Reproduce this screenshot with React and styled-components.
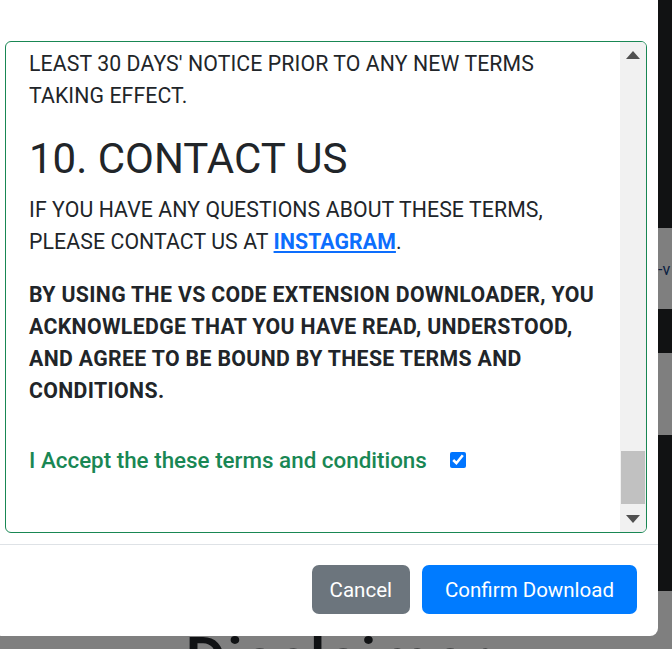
import React from "react";
import styled, { createGlobalStyle } from "styled-components";

const GlobalStyle = createGlobalStyle`
  html, body {
    margin: 0;
    padding: 0;
    font-family: Roboto, "Liberation Sans", sans-serif;
    color: #212529;
  }
`;

// what is visible of the page behind the backdrop, on the right edge
const stripes = [
  { h: 228, dark: true },
  { h: 81, dark: false, text: "-v" },
  { h: 44, dark: true },
  { h: 82, dark: false },
  { h: 156, dark: true },
  { h: 58, dark: false },
];

const Page = styled.div`
  position: relative;
  width: 672px;
  height: 649px;
  overflow: hidden;
  background: #fff;
`;

const Underlay = styled.div`
  display: flex;
  height: 100%;
`;

const MainArea = styled.div`
  flex: 1;
  padding: 624px 0 0 185px;
`;

const PageTitle = styled.h1`
  margin: 0;
  font-size: 64px;
  font-weight: 500;
  line-height: 1.2;
  color: #212529;
`;

const SideStrip = styled.div`
  width: 14px;
  display: flex;
  flex-direction: column;
`;

const Stripe = styled.div`
  height: ${(p) => p.$h}px;
  background: ${(p) => (p.$dark ? "#222427" : "#fff")};
  padding-top: 32px;
  box-sizing: border-box;
  font-size: 16px;
  color: #123f85;
  white-space: nowrap;
  overflow: hidden;
`;

const Backdrop = styled.div`
  position: absolute;
  inset: 0;
  background: rgba(0, 0, 0, 0.5);
`;

const Modal = styled.div`
  position: absolute;
  left: -6px;
  top: -10px;
  width: 664px;
  background: #fff;
  border-radius: 8px;
  display: flex;
  flex-direction: column;
`;

const ModalBody = styled.div`
  padding: 51px 11px 11px;
`;

const TermsBox = styled.div`
  display: flex;
  height: 492px;
  box-sizing: border-box;
  border: 1px solid #198754;
  border-radius: 6px;
  overflow: hidden;
`;

const TermsContent = styled.div`
  flex: 1;
  padding: 6px 13px 0 23px;
  font-size: 21.25px;
  line-height: 32px;
`;

const Para = styled.p`
  margin: 0 0 ${(p) => p.$mb ?? 16}px;
  text-transform: uppercase;
  font-weight: ${(p) => (p.$bold ? 700 : 400)};
  letter-spacing: ${(p) => (p.$bold ? "0.35px" : "0.1px")};
`;

const SectionTitle = styled.h2`
  margin: 22px 0 10px;
  font-size: 42px;
  font-weight: 400;
  line-height: 1.2;
  text-transform: uppercase;
`;

const Link = styled.a`
  color: #0d6efd;
  font-weight: 700;
  text-decoration: underline;
`;

const AcceptRow = styled.label`
  display: flex;
  align-items: center;
  gap: 23px;
  margin-top: 37px;
  font-size: 22.4px;
  font-weight: 500;
  color: #198754;
`;

const Check = styled.input`
  width: 16px;
  height: 16px;
  margin: 0;
  accent-color: #0075ff;
`;

const ScrollBar = styled.div`
  width: 26px;
  display: flex;
  flex-direction: column;
  background: #f1f1f1;
`;

const ArrowButton = styled.div`
  height: 26px;
  display: flex;
  align-items: center;
  justify-content: center;
`;

const Track = styled.div`
  flex: 1;
  display: flex;
  flex-direction: column;
  justify-content: flex-end;
  padding: 0 1px 2px;
`;

const Thumb = styled.div`
  height: 53px;
  background: #c1c1c1;
`;

const ModalFooter = styled.div`
  display: flex;
  justify-content: flex-end;
  gap: 12px;
  padding: 20px 21px 22px;
  border-top: 1px solid #dee2e6;
`;

const Button = styled.button`
  height: 49px;
  padding: 0 ${(p) => (p.$variant === "primary" ? 23 : 18)}px;
  border: none;
  border-radius: 7px;
  font-family: inherit;
  font-size: 20.5px;
  color: #fff;
  background: ${(p) => (p.$variant === "primary" ? "#007bff" : "#6c757d")};
  cursor: pointer;
`;

function Arrow({ up }) {
  return (
    <svg width="14" height="8" viewBox="0 0 14 8">
      <polygon points={up ? "7,0 14,8 0,8" : "0,0 14,0 7,8"} fill="#505050" />
    </svg>
  );
}

function App() {
  return (
    <Page>
      <GlobalStyle />
      <Underlay>
        <MainArea>
          <PageTitle>Disclaimer</PageTitle>
        </MainArea>
        <SideStrip>
          {stripes.map((s, i) => (
            <Stripe key={i} $h={s.h} $dark={s.dark}>{s.text}</Stripe>
          ))}
        </SideStrip>
      </Underlay>
      <Backdrop />
      <Modal>
        <ModalBody>
          <TermsBox>
            <TermsContent>
              <Para>least 30 days' notice prior to any new terms taking effect.</Para>
              <SectionTitle>10. Contact Us</SectionTitle>
              <Para $mb={21}>
                If you have any questions about these terms, please contact us at{" "}
                <Link href="#">Instagram</Link>.
              </Para>
              <Para $bold $mb={0}>
                By using the VS Code Extension Downloader, you acknowledge that you have
                read, understood, and agree to be bound by these terms and conditions.
              </Para>
              <AcceptRow>
                I Accept the these terms and conditions
                <Check type="checkbox" defaultChecked />
              </AcceptRow>
            </TermsContent>
            <ScrollBar>
              <ArrowButton><Arrow up /></ArrowButton>
              <Track><Thumb /></Track>
              <ArrowButton><Arrow /></ArrowButton>
            </ScrollBar>
          </TermsBox>
        </ModalBody>
        <ModalFooter>
          <Button>Cancel</Button>
          <Button $variant="primary">Confirm Download</Button>
        </ModalFooter>
      </Modal>
    </Page>
  );
}

export default App;
